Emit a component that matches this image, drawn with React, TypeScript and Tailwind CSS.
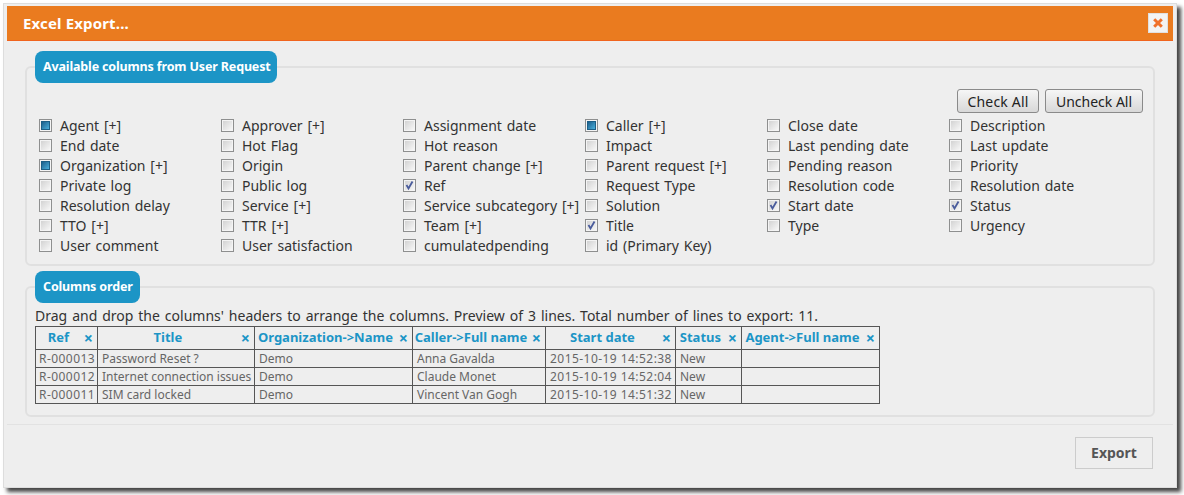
import React from "react";

type C = [string, 0 | 1 | 2];
const cols: C[][] = [
  [["Agent [+]", 2], ["End date", 0], ["Organization [+]", 2], ["Private log", 0], ["Resolution delay", 0], ["TTO [+]", 0], ["User comment", 0]],
  [["Approver [+]", 0], ["Hot Flag", 0], ["Origin", 0], ["Public log", 0], ["Service [+]", 0], ["TTR [+]", 0], ["User satisfaction", 0]],
  [["Assignment date", 0], ["Hot reason", 0], ["Parent change [+]", 0], ["Ref", 1], ["Service subcategory [+]", 0], ["Team [+]", 0], ["cumulatedpending", 0]],
  [["Caller [+]", 2], ["Impact", 0], ["Parent request [+]", 0], ["Request Type", 0], ["Solution", 0], ["Title", 1], ["id (Primary Key)", 0]],
  [["Close date", 0], ["Last pending date", 0], ["Pending reason", 0], ["Resolution code", 0], ["Start date", 1], ["Type", 0]],
  [["Description", 0], ["Last update", 0], ["Priority", 0], ["Resolution date", 0], ["Status", 1], ["Urgency", 0]],
];

function Box({ state }: { state: 0 | 1 | 2 }) {
  return (
    <span className="w-[13px] h-[13px] shrink-0 border border-[#8e8f8f] shadow-[inset_0_0_0_1px_#f4f4f4] bg-gradient-to-br from-[#cfcfcf] to-[#fbfbfb] flex items-center justify-center">
      {state === 2 && <span className="block w-[9px] h-[9px] border border-[#1d5f86] bg-gradient-to-br from-[#1c5f8c] to-[#4bb0dc]" />}
      {state === 1 && (
        <svg width="11" height="11" viewBox="0 0 11 11">
          <path d="M2.5 5 L4.5 8.5 L8.5 1.5" fill="none" stroke="#4a5c9c" strokeWidth="1.8" />
        </svg>
      )}
    </span>
  );
}

function Legend({ children, w }: { children: React.ReactNode; w: string }) {
  return (
    <div className={`-mt-[17px] ml-[8px] h-8 ${w} rounded-lg bg-[#1c95c6] text-white font-bold text-[12.5px] tracking-[-0.15px] whitespace-nowrap flex items-center pl-2`}>
      {children}
    </div>
  );
}

const headers: [string, number][] = [
  ["Ref", 62],
  ["Title", 157],
  ["Organization->Name", 158],
  ["Caller->Full name", 133],
  ["Start date", 130],
  ["Status", 66],
  ["Agent->Full name", 138],
];
const rows = [
  ["R-000013", "Password Reset ?", "Demo", "Anna Gavalda", "2015-10-19 14:52:38", "New", ""],
  ["R-000012", "Internet connection issues", "Demo", "Claude Monet", "2015-10-19 14:52:04", "New", ""],
  ["R-000011", "SIM card locked", "Demo", "Vincent Van Gogh", "2015-10-19 14:51:32", "New", ""],
];

export default function App() {
  return (
    <div className="w-[1184px] h-[495px] bg-white overflow-hidden pl-[3px] pt-[3px] text-[#333] font-['Noto_Sans','DejaVu_Sans',sans-serif] text-[14px]">
      <div className="w-[1174px] h-[485px] bg-[#eeeeee] border border-[#dddddd] shadow-[4px_4px_4px_#444] px-[3px] pt-[2px] flex flex-col">
        <div className="h-[35px] shrink-0 bg-[#ea7b1f] border-b border-[#f0641e] flex items-center justify-between pl-4 pr-[5px] text-white font-bold text-[15px] tracking-[0.15px]">
          <span>Excel Export...</span>
          <span className="w-5 h-5 bg-[#f3f3f3] border border-[#e0e0e0] flex items-center justify-center">
            <svg width="10" height="10" viewBox="0 0 10 10">
              <path d="M1.2 1.2 L8.8 8.8 M8.8 1.2 L1.2 8.8" stroke="#f0702a" strokeWidth="3" />
            </svg>
          </span>
        </div>

        <div className="mt-[25px] mx-[18px] h-[200px] shrink-0 border-2 border-[#e0e0e0] rounded-md">
          <Legend w="w-[242px]">Available columns from User Request</Legend>
          <div className="flex justify-end gap-[6px] mt-[6px] mr-[10px]">
            <button className="h-6 w-[82px] border border-[#8a8a8a] rounded-[3px] bg-gradient-to-b from-[#f6f6f6] to-[#d8d8d8] text-[#222] text-[14px] tracking-[0.2px]">Check All</button>
            <button className="h-6 w-[98px] border border-[#8a8a8a] rounded-[3px] bg-gradient-to-b from-[#f6f6f6] to-[#d8d8d8] text-[#222] text-[14px]">Uncheck All</button>
          </div>
          <div className="grid grid-cols-[182px_182px_182px_182px_182px_182px] ml-[12px] mt-[2px]">
            {cols.map((col, i) => (
              <div key={i} className="flex flex-col">
                {col.map(([label, state]) => (
                  <div key={label} className="h-5 flex items-center gap-2 whitespace-nowrap [word-spacing:1.2px]">
                    <Box state={state} />
                    <span>{label}</span>
                  </div>
                ))}
              </div>
            ))}
          </div>
        </div>

        <div className="mt-5 mx-[18px] h-[131px] shrink-0 border-2 border-[#e0e0e0] rounded-md">
          <Legend w="w-[105px]">Columns order</Legend>
          <div className="ml-[8px] mt-[3px] h-5 leading-5 whitespace-nowrap [word-spacing:1.3px]">
            Drag and drop the columns' headers to arrange the columns. Preview of 3 lines. Total number of lines to export: 11.
          </div>
          <table className="ml-[8px] border-collapse table-fixed w-[845px] text-[12px] text-[#666]">
            <colgroup>
              {headers.map(([h, w]) => <col key={h} style={{ width: w }} />)}
            </colgroup>
            <thead>
              <tr className="h-[23px]">
                {headers.map(([h]) => (
                  <th key={h} className="border border-[#555] p-0 text-[#1c95c6] font-bold text-[13px]">
                    <div className="flex items-center pl-0 pr-[4px] whitespace-nowrap">
                      <span className="flex-1 text-center">{h}</span>
                      <span className="ml-[3px] text-[16px] leading-none">×</span>
                    </div>
                  </th>
                ))}
              </tr>
            </thead>
            <tbody>
              {rows.map((r) => (
                <tr key={r[0]} className="h-[18px]">
                  {r.map((c, i) => (
                    <td key={i} className={i === 0 ? "border border-[#555] p-0 pl-[3px] leading-none whitespace-nowrap tracking-[0.45px]" : i === 4 ? "border border-[#555] p-0 pl-[4px] leading-none whitespace-nowrap tracking-[0.45px]" : "border border-[#555] p-0 pl-[4px] leading-none whitespace-nowrap"}>{c}</td>
                  ))}
                </tr>
              ))}
            </tbody>
          </table>
        </div>

        <div className="mt-[7px] border-t border-[#e2e2e2] flex justify-end pr-[20px] pt-3">
          <button className="w-[78px] h-8 pb-[2px] border border-[#cccccc] font-bold text-[#555] text-[14px]">Export</button>
        </div>
      </div>
    </div>
  );
}
